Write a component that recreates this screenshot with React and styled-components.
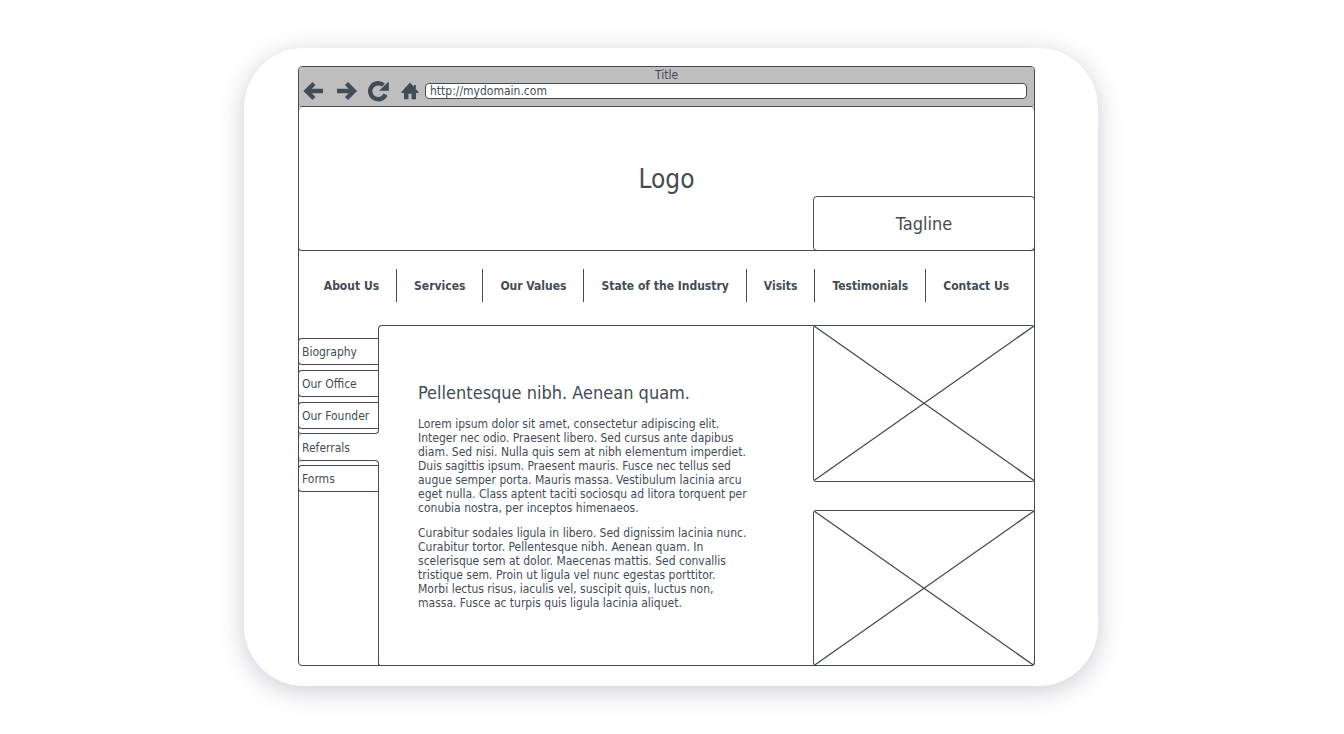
import React from 'react';
import styled, { createGlobalStyle } from 'styled-components';

const ink = '#434c55';

const GlobalStyle = createGlobalStyle`
    * {
        box-sizing: border-box;
    }

    body {
        margin: 0;
        background: #fff;
        color: ${ink};
        font-family: 'DejaVu Sans Condensed', 'DejaVu Sans', sans-serif;
        font-size: 12px;
    }
`;

const Page = styled.div`
    display: flex;
    justify-content: center;
    min-height: 100vh;
    padding: 48px 26px 48px 24px;
`;

const Card = styled.div`
    width: 100%;
    max-width: 854px;
    padding: 18px 63px 20px 54px;
    border-radius: 60px;
    background: #fff;
    box-shadow: 0 5px 24px rgba(50, 50, 93, 0.25);
`;

const Browser = styled.div`
    display: flex;
    flex-direction: column;
    height: 100%;
    border: 1px solid ${ink};
    border-radius: 4px;
`;

const Toolbar = styled.header`
    padding: 1px 0 6px;
    border-bottom: 1px solid ${ink};
    border-radius: 3px;
    background: #bebebe;
`;

const WindowTitle = styled.div`
    line-height: 14px;
    text-align: center;
`;

const Controls = styled.div`
    display: flex;
    align-items: center;
    gap: 10px;
    padding: 0 7px 0 4px;
`;

const IconButton = styled.button`
    display: flex;
    padding: 0;
    border: 0;
    background: none;
    color: ${ink};

    svg {
        overflow: visible;
    }
`;

const Address = styled.input`
    flex: 1;
    min-width: 0;
    height: 16px;
    margin-left: -4px;
    padding: 0 4px;
    border: 1px solid ${ink};
    border-radius: 4px;
    background: #fff;
    color: ${ink};
    font: inherit;
`;

const Hero = styled.section`
    display: grid;
    grid-template-columns: 1fr 221px;
    grid-template-rows: 89px 54px;
    margin: 0 -1px;
    border: 1px solid ${ink};
    border-top: 0;
    border-radius: 4px;
`;

const Logo = styled.h1`
    grid-area: 1 / 1 / 3 / 3;
    align-self: center;
    margin: 0;
    font-size: 26px;
    font-weight: 400;
    text-align: center;
`;

const Tagline = styled.div`
    grid-area: 2 / 2;
    margin: 0 -1px -1px 0;
    border: 1px solid ${ink};
    border-radius: 4px;
    font-size: 18px;
    line-height: 53px;
    text-align: center;
`;

const Nav = styled.nav`
    display: flex;
    justify-content: center;
    padding: 18px 0 23px;
`;

const NavLink = styled.a`
    padding: 2px 17px 0;
    border-right: 1px solid ${ink};
    color: ${ink};
    font-weight: 700;
    line-height: 31px;
    text-decoration: none;
    white-space: nowrap;

    &:last-child {
        border-right: 0;
    }
`;

const Main = styled.main`
    display: grid;
    flex: 1;
    grid-template-columns: 79px 1fr 221px;
    margin-bottom: -1px;
`;

const Tabs = styled.nav`
    display: flex;
    flex-direction: column;
    margin: 4px -1px 0 -1px;
`;

const TabGroup = styled.div`
    position: relative;
    z-index: 2;
    display: flex;
    flex-direction: column;
    gap: 5px;
    padding: ${props => (props.$last ? '4px 0 0' : '9px 0 4px')};
    flex: ${props => (props.$last ? 1 : 'none')};
    border: 0 solid ${ink};
    border-right-width: 1px;
    border-top-width: ${props => (props.$last ? '1px' : 0)};
    border-bottom-width: ${props => (props.$last ? 0 : '1px')};
    border-radius: ${props => (props.$last ? '4px 4px 0 0' : '0 0 4px 4px')};
`;

const Tab = styled.a`
    display: block;
    padding: 2px 3px 0;
    border: 1px solid ${ink};
    border-right: 0;
    border-radius: 4px 0 0 4px;
    color: ${ink};
    line-height: 23px;
    text-decoration: none;
    white-space: nowrap;
`;

const ActiveTab = styled(Tab)`
    position: relative;
    border-top: 0;
    border-bottom: 0;
    line-height: 24px;

    /* opens the panel edge beside the selected tab */
    &::after {
        content: '';
        position: absolute;
        top: -4px;
        right: 0;
        bottom: -4px;
        width: 1px;
        background: #fff;
    }
`;

const Article = styled.article`
    margin-right: -4px;
    padding: 56px 64px 55px 39px;
    border-top: 1px solid ${ink};
    border-left: 1px solid ${ink};
    border-radius: 4px 0 0 4px;
`;

const Heading = styled.h2`
    margin: 0 0 13px;
    font-size: 18px;
    font-weight: 400;
    line-height: 22px;
`;

const Paragraph = styled.p`
    max-width: 330px;
    margin: 0 0 11px;
    line-height: 14px;

    &:last-child {
        margin-bottom: 0;
    }
`;

const Pictures = styled.aside`
    display: flex;
    flex-direction: column;
    gap: 28px;
    margin-right: -1px;
`;

const Picture = styled.div`
    flex: 1;
    min-height: 0;
    border: 1px solid ${ink};
    border-radius: 3px;

    svg {
        display: block;
        width: 100%;
        height: 100%;
    }
`;

const links = ['About Us', 'Services', 'Our Values', 'State of the Industry', 'Visits', 'Testimonials', 'Contact Us'];

const Placeholder = () => (
    <Picture>
        <svg viewBox="0 0 220 154" preserveAspectRatio="none" stroke={ink} strokeWidth="1.3" aria-hidden="true">
            <path d="M0 0L220 154M220 0L0 154" />
        </svg>
    </Picture>
);

const App = () => {
    return (
        <Page>
            <GlobalStyle />
            <Card>
                <Browser>
                    <Toolbar>
                        <WindowTitle>Title</WindowTitle>
                        <Controls>
                            <IconButton aria-label="Back">
                                <svg width="22" height="18" viewBox="0 0 22 18" fill="none" stroke="currentColor" strokeWidth="4.4">
                                    <path d="M11 1.500L3.500 9L11 16.500M4 9H20" />
                                </svg>
                            </IconButton>
                            <IconButton aria-label="Forward">
                                <svg width="22" height="18" viewBox="0 0 22 18" fill="none" stroke="currentColor" strokeWidth="4.4">
                                    <path d="M11.500 1.500L19 9L11.500 16.500M2 9H18.500" />
                                </svg>
                            </IconButton>
                            <IconButton aria-label="Reload">
                                <svg width="22" height="18" viewBox="0 0 22 18" fill="none" stroke="currentColor" strokeWidth="4.4">
                                    <path d="M18.500 12.500A8 8 0 1 1 16.500 3.200" />
                                    <path d="M21.800 -0.500V8.800H12Z" fill="currentColor" stroke="none" />
                                </svg>
                            </IconButton>
                            <IconButton aria-label="Home">
                                <svg width="20" height="18" viewBox="0 0 20 18" fill="currentColor">
                                    <path d="M11 0.500L2.600 9.800V11H5V17.200H9.500V11.800H12.500V17.200H17V11H19.400V9.800L16.800 7V3H14.800V4.700Z" />
                                </svg>
                            </IconButton>
                            <Address aria-label="Address" defaultValue="http://mydomain.com" />
                        </Controls>
                    </Toolbar>
                    <Hero>
                        <Logo>Logo</Logo>
                        <Tagline>Tagline</Tagline>
                    </Hero>
                    <Nav>
                        {links.map(link => (
                            <NavLink href="#" key={link}>{link}</NavLink>
                        ))}
                    </Nav>
                    <Main>
                        <Tabs>
                            <TabGroup>
                                <Tab href="#">Biography</Tab>
                                <Tab href="#">Our Office</Tab>
                                <Tab href="#">Our Founder</Tab>
                            </TabGroup>
                            <ActiveTab href="#" aria-current="page">Referrals</ActiveTab>
                            <TabGroup $last>
                                <Tab href="#">Forms</Tab>
                            </TabGroup>
                        </Tabs>
                        <Article>
                            <Heading>Pellentesque nibh. Aenean quam.</Heading>
                            <Paragraph>
                                Lorem ipsum dolor sit amet, consectetur adipiscing elit. Integer nec odio. Praesent
                                libero. Sed cursus ante dapibus diam. Sed nisi. Nulla quis sem at nibh elementum
                                imperdiet. Duis sagittis ipsum. Praesent mauris. Fusce nec tellus sed augue semper
                                porta. Mauris massa. Vestibulum lacinia arcu eget nulla. Class aptent taciti sociosqu
                                ad litora torquent per conubia nostra, per inceptos himenaeos.
                            </Paragraph>
                            <Paragraph>
                                Curabitur sodales ligula in libero. Sed dignissim lacinia nunc. Curabitur tortor.
                                Pellentesque nibh. Aenean quam. In scelerisque sem at dolor. Maecenas mattis. Sed
                                convallis tristique sem. Proin ut ligula vel nunc egestas porttitor. Morbi lectus
                                risus, iaculis vel, suscipit quis, luctus non, massa. Fusce ac turpis quis ligula
                                lacinia aliquet.
                            </Paragraph>
                        </Article>
                        <Pictures>
                            <Placeholder />
                            <Placeholder />
                        </Pictures>
                    </Main>
                </Browser>
            </Card>
        </Page>
    );
};

export default App;
